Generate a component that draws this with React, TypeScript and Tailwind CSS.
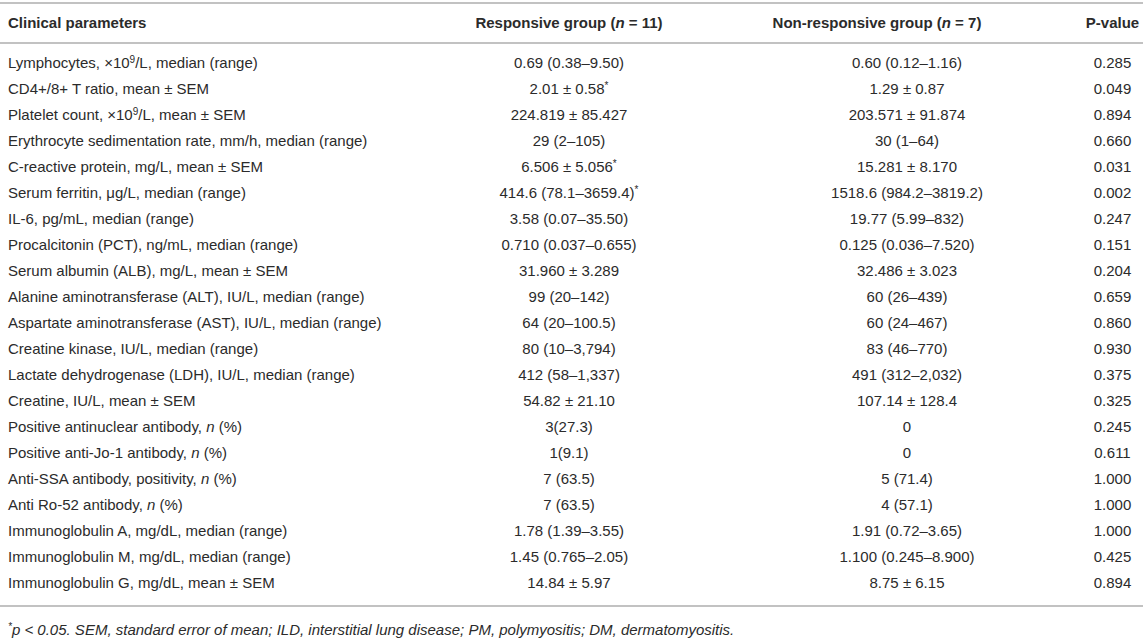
import React from "react";

type Row = {
  label: React.ReactNode;
  resp: React.ReactNode;
  nonResp: React.ReactNode;
  p: string;
};

const Star = () => <sup className="text-[10px] -top-[5px]">*</sup>;
const Nine = () => <sup className="text-[10px]">9</sup>;
const N = () => <i>n</i>;

const rows: Row[] = [
  { label: <>Lymphocytes, ×10<Nine />/L, median (range)</>, resp: "0.69 (0.38–9.50)", nonResp: "0.60 (0.12–1.16)", p: "0.285" },
  { label: "CD4+/8+ T ratio, mean ± SEM", resp: <>2.01 ± 0.58<Star /></>, nonResp: "1.29 ± 0.87", p: "0.049" },
  { label: <>Platelet count, ×10<Nine />/L, mean ± SEM</>, resp: "224.819 ± 85.427", nonResp: "203.571 ± 91.874", p: "0.894" },
  { label: "Erythrocyte sedimentation rate, mm/h, median (range)", resp: "29 (2–105)", nonResp: "30 (1–64)", p: "0.660" },
  { label: "C-reactive protein, mg/L, mean ± SEM", resp: <>6.506 ± 5.056<Star /></>, nonResp: "15.281 ± 8.170", p: "0.031" },
  { label: "Serum ferritin, μg/L, median (range)", resp: <>414.6 (78.1–3659.4)<Star /></>, nonResp: "1518.6 (984.2–3819.2)", p: "0.002" },
  { label: "IL-6, pg/mL, median (range)", resp: "3.58 (0.07–35.50)", nonResp: "19.77 (5.99–832)", p: "0.247" },
  { label: "Procalcitonin (PCT), ng/mL, median (range)", resp: "0.710 (0.037–0.655)", nonResp: "0.125 (0.036–7.520)", p: "0.151" },
  { label: "Serum albumin (ALB), mg/L, mean ± SEM", resp: "31.960 ± 3.289", nonResp: "32.486 ± 3.023", p: "0.204" },
  { label: "Alanine aminotransferase (ALT), IU/L, median (range)", resp: "99 (20–142)", nonResp: "60 (26–439)", p: "0.659" },
  { label: "Aspartate aminotransferase (AST), IU/L, median (range)", resp: "64 (20–100.5)", nonResp: "60 (24–467)", p: "0.860" },
  { label: "Creatine kinase, IU/L, median (range)", resp: "80 (10–3,794)", nonResp: "83 (46–770)", p: "0.930" },
  { label: "Lactate dehydrogenase (LDH), IU/L, median (range)", resp: "412 (58–1,337)", nonResp: "491 (312–2,032)", p: "0.375" },
  { label: "Creatine, IU/L, mean ± SEM", resp: "54.82 ± 21.10", nonResp: "107.14 ± 128.4", p: "0.325" },
  { label: <>Positive antinuclear antibody, <N /> (%)</>, resp: "3(27.3)", nonResp: "0", p: "0.245" },
  { label: <>Positive anti-Jo-1 antibody, <N /> (%)</>, resp: "1(9.1)", nonResp: "0", p: "0.611" },
  { label: <>Anti-SSA antibody, positivity, <N /> (%)</>, resp: "7 (63.5)", nonResp: "5 (71.4)", p: "1.000" },
  { label: <>Anti Ro-52 antibody, <N /> (%)</>, resp: "7 (63.5)", nonResp: "4 (57.1)", p: "1.000" },
  { label: "Immunoglobulin A, mg/dL, median (range)", resp: "1.78 (1.39–3.55)", nonResp: "1.91 (0.72–3.65)", p: "1.000" },
  { label: "Immunoglobulin M, mg/dL, median (range)", resp: "1.45 (0.765–2.05)", nonResp: "1.100 (0.245–8.900)", p: "0.425" },
  { label: "Immunoglobulin G, mg/dL, mean ± SEM", resp: "14.84 ± 5.97", nonResp: "8.75 ± 6.15", p: "0.894" },
];

export default function App() {
  return (
    <div className="w-[1143px] h-[643px] bg-white text-[#2b2b2b] font-['Liberation_Sans',Arial,sans-serif] text-[15px] pt-[2px] overflow-hidden">
      {/* header */}
      <div className="flex items-center h-[42px] border-y-2 border-[#c2c2c2] font-bold">
        <div className="w-[440px] pl-2">Clinical parameters</div>
        <div className="w-[258px] text-center">
          Responsive group (<i>n</i> = 11)
        </div>
        <div className="w-[384px] text-center pr-[26px]">
          Non-responsive group (<i>n</i> = 7)
        </div>
        <div className="w-[61px] text-center">P-value</div>
      </div>

      {/* body */}
      <div className="pt-[6px] pb-[9px] border-b-2 border-[#c2c2c2]">
        {rows.map((r, i) => (
          <div key={i} className="flex items-center h-[26px]">
            <div className="w-[440px] pl-2 whitespace-nowrap">{r.label}</div>
            <div className="w-[258px] text-center">{r.resp}</div>
            <div className="w-[384px] text-center pl-[34px]">{r.nonResp}</div>
            <div className="w-[61px] text-center">{r.p}</div>
          </div>
        ))}
      </div>

      <p className="pl-2 pt-[12px] text-[15px] italic whitespace-nowrap">
        <sup className="text-[10px] -top-[5px]">*</sup>p &lt; 0.05. SEM, standard error of mean; ILD, interstitial lung disease; PM,
        polymyositis; DM, dermatomyositis.
      </p>
    </div>
  );
}
